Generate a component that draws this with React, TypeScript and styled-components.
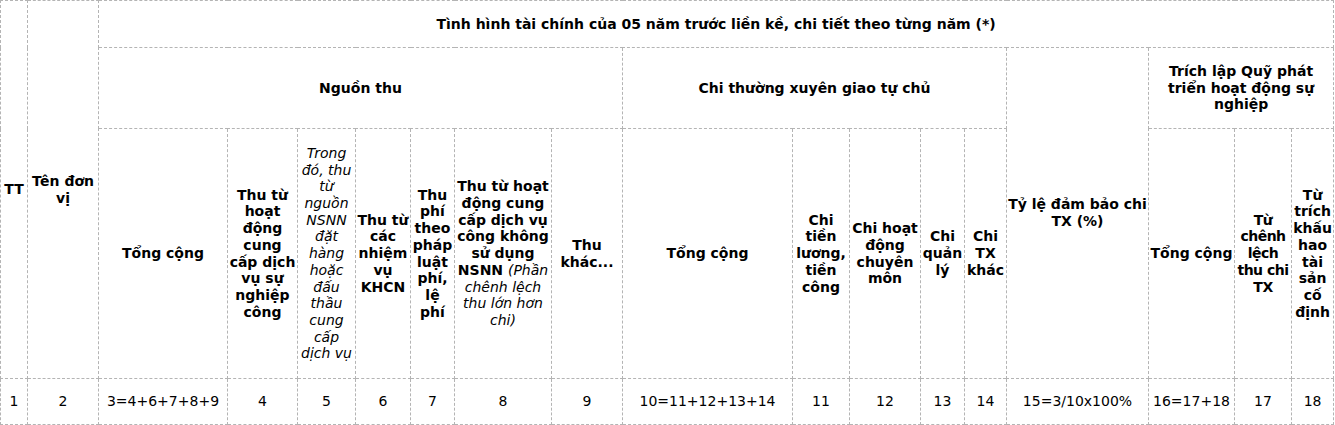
import React from "react";
import styled, { createGlobalStyle } from "styled-components";

const Global = createGlobalStyle`
  html, body { margin: 0; padding: 0; background: #fff; }
  body { font-family: "DejaVu Sans", Verdana, sans-serif; color: #000; }
`;

const Table = styled.table`
  border-collapse: collapse;
  table-layout: fixed;
  width: 1334px;
  font-size: 14px;
  line-height: 16.7px;
`;

const Row = styled.tr<{ $h: number }>`
  height: ${(p) => p.$h}px;
`;

const Head = styled.th<{ $tight?: boolean }>`
  border: 1px dashed #b4b4b4;
  padding: ${(p) => (p.$tight ? "1px 0" : "1px 1px")};
  letter-spacing: ${(p) => (p.$tight ? "-0.5px" : "normal")};
  font-weight: bold;
  text-align: center;
  vertical-align: middle;
  word-wrap: break-word;
`;

const Cell = styled.td`
  border: 1px dashed #b4b4b4;
  padding: 1px 1px;
  font-weight: normal;
  text-align: center;
  vertical-align: middle;
`;

const Note = styled.em`
  font-weight: normal;
  font-style: italic;
`;

const widths = [27, 71, 129, 70, 58, 55, 44, 97, 71, 170, 57, 71, 44, 42, 142, 86, 57, 42];
const data = [
  "1", "2", "3=4+6+7+8+9", "4", "5", "6", "7", "8", "9",
  "10=11+12+13+14", "11", "12", "13", "14", "15=3/10x100%", "16=17+18", "17", "18",
];

export default function App() {
  return (
    <>
      <Global />
      <Table>
        <colgroup>
          {widths.map((w, i) => (
            <col key={i} style={{ width: w }} />
          ))}
        </colgroup>
        <tbody>
          <Row $h={47}>
            <Head rowSpan={3}>TT</Head>
            <Head rowSpan={3}>Tên đơn vị</Head>
            <Head colSpan={16}>
              Tình hình tài chính của 05 năm trước liền kề, chi tiết theo từng năm (*)
            </Head>
          </Row>
          <Row $h={81}>
            <Head colSpan={7}>Nguồn thu</Head>
            <Head colSpan={5}>Chi thường xuyên giao tự chủ</Head>
            <Head rowSpan={2}>Tỷ lệ đảm bảo chi TX (%)</Head>
            <Head colSpan={3}>Trích lập Quỹ phát triển hoạt động sự nghiệp</Head>
          </Row>
          <Row $h={250}>
            <Head>Tổng cộng</Head>
            <Head>Thu từ hoạt động cung cấp dịch vụ sự nghiệp công</Head>
            <Head>
              <Note>Trong đó, thu từ nguồn NSNN đặt hàng hoặc đấu thầu cung cấp dịch vụ</Note>
            </Head>
            <Head>Thu từ các nhiệm vụ KHCN</Head>
            <Head>Thu phí theo pháp luật phí, lệ phí</Head>
            <Head>
              Thu từ hoạt động cung cấp dịch vụ công không sử dụng NSNN{" "}
              <Note>(Phần chênh lệch thu lớn hơn chi)</Note>
            </Head>
            <Head>Thu khác...</Head>
            <Head>Tổng cộng</Head>
            <Head>Chi tiền lương, tiền công</Head>
            <Head>Chi hoạt động chuyên môn</Head>
            <Head>Chi quản lý</Head>
            <Head>Chi TX khác</Head>
            <Head>Tổng cộng</Head>
            <Head $tight>Từ chênh lệch thu chi TX</Head>
            <Head>Từ trích khấu hao tài sản cố định</Head>
          </Row>
          <Row $h={46}>
            {data.map((d, i) => (
              <Cell key={i}>{d}</Cell>
            ))}
          </Row>
        </tbody>
      </Table>
    </>
  );
}
